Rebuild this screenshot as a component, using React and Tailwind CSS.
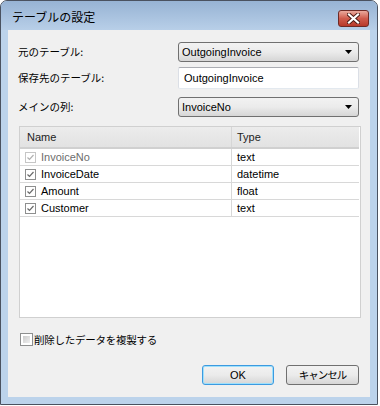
import React from "react";

const FONT = { fontFamily: "'Liberation Sans','Noto Sans CJK JP',sans-serif" };
const JP = { fontFamily: "'Noto Sans CJK JP','Liberation Sans',sans-serif" };

function Arrow() {
  return (
    <svg width="8" height="5" viewBox="0 0 8 5" className="shrink-0">
      <path d="M0 0 H7 L3.5 4 Z" fill="#000" />
    </svg>
  );
}

function Combo({ value }) {
  return (
    <div className="w-[181px] h-[20px] rounded-[3px] border border-[#707070] bg-gradient-to-b from-[#f2f2f2] via-[#ebebeb] to-[#d6d6d6] flex items-center justify-between pl-[3px] pr-[5px] text-[11px] text-black">
      <span>{value}</span>
      <Arrow />
    </div>
  );
}

function RowCheck({ disabled }) {
  const border = disabled ? "border-[#c6c6c6]" : "border-[#8e8f8f]";
  const stroke = disabled ? "#b0b0b0" : "#6a6a6a";
  return (
    <div className={`w-[11px] h-[11px] border ${border} bg-white flex items-center justify-center shrink-0`}>
      <svg width="9" height="9" viewBox="0 0 9 9">
        <path d="M1.5 4.5 L3.5 6.5 L7.5 2" fill="none" stroke={stroke} strokeWidth="1.2" />
      </svg>
    </div>
  );
}

const rows = [
  { name: "InvoiceNo", type: "text", disabled: true },
  { name: "InvoiceDate", type: "datetime" },
  { name: "Amount", type: "float" },
  { name: "Customer", type: "text" },
];

export default function App() {
  return (
    <div className="w-[380px] h-[406px] bg-white" style={FONT}>
      <div className="w-[378px] h-[405px] border border-[#4a5260] rounded-t-[7px] bg-[#bcd3eb] flex flex-col overflow-hidden">
        {/* title bar */}
        <div className="h-[29px] shrink-0 bg-gradient-to-b from-[#97b3d4] to-[#b8cfe8] flex items-start justify-between pl-[11px] pr-[8px]">
          <span className="mt-[9px] text-[12px] leading-[14px] text-black" style={JP}>テーブルの設定</span>
          <div className="mt-[9px] w-[31px] h-[17px] rounded-[3px] border border-[#6e2a25] bg-gradient-to-b from-[#e9a99d] via-[#cf5b4c] to-[#b8392a] flex items-center justify-center">
            <svg width="13" height="11" viewBox="0 0 13 11">
              <path d="M2 1.5 L11 9.5 M11 1.5 L2 9.5" stroke="#4a1a14" strokeWidth="4" strokeLinecap="square" />
              <path d="M2 1.5 L11 9.5 M11 1.5 L2 9.5" stroke="#ffffff" strokeWidth="2.2" strokeLinecap="square" />
            </svg>
          </div>
        </div>
        {/* client area */}
        <div className="mx-[7px] h-[367px] bg-[#f0f0f0] flex flex-col pl-[10px] pr-[11px] pt-[12px]">
          <div className="flex items-center justify-between h-[20px]">
            <span className="text-[10.5px] text-black" style={JP}>元のテーブル:</span>
            <Combo value="OutgoingInvoice" />
          </div>
          <div className="flex items-center justify-between h-[22px] mt-[5px]">
            <span className="text-[10.5px] text-black" style={JP}>保存先のテーブル:</span>
            <div className="w-[181px] h-[22px] bg-white border border-[#dbdfe6] border-t-[#abadb3] border-b-[#e3e9ef] rounded-[2px] flex items-center pl-[5px] text-[11px] text-black">
              OutgoingInvoice
            </div>
          </div>
          <div className="flex items-center justify-between h-[20px] mt-[8px]">
            <span className="text-[10.5px] text-black" style={JP}>メインの列:</span>
            <Combo value="InvoiceNo" />
          </div>
          {/* table */}
          <div className="mt-[9px] ml-[1px] w-[342px] h-[192px] border border-[#d0d0d0] bg-white pr-[1px]">
            <div className="flex h-[22px] bg-gradient-to-b from-[#ececec] to-[#e2e2e2] border-b-2 border-[#d0d0d0] text-[11px] text-[#222]">
              <div className="w-[212px] pl-[7px] flex items-center border-r border-[#d6d6d6]">Name</div>
              <div className="w-[127px] pl-[5px] flex items-center">Type</div>
            </div>
            {rows.map((r) => (
              <div key={r.name} className="flex h-[17px] border-b border-[#d8d8d8] text-[11px]">
                <div className="w-[212px] pl-[5px] flex items-center gap-[5px] border-r border-[#d8d8d8]">
                  <RowCheck disabled={r.disabled} />
                  <span className={r.disabled ? "text-[#6d6d6d]" : "text-black"}>{r.name}</span>
                </div>
                <div className="w-[127px] pl-[5px] flex items-center text-black">{r.type}</div>
              </div>
            ))}
          </div>
          {/* checkbox */}
          <div className="mt-[15px] flex items-center gap-[1px] h-[13px] ml-[2px]">
            <div className="w-[13px] h-[13px] border border-[#8e8f8f] bg-white p-[2px] shrink-0">
              <div className="w-full h-full bg-gradient-to-br from-[#cbcbcb] to-[#f0f0f0]" />
            </div>
            <span className="text-[10.5px] tracking-[-0.25px] text-black" style={JP}>削除したデータを複製する</span>
          </div>
          {/* buttons */}
          <div className="mt-[19px] flex justify-end gap-[12px] pr-[0px]">
            <div className="w-[72px] h-[20px] rounded-[3px] border border-[#3c9ae0] shadow-[inset_0_0_0_1px_#9fe0fb] bg-gradient-to-b from-[#f2f2f2] via-[#ebebeb] to-[#d6d6d6] flex items-center justify-center text-[11px] text-black">
              OK
            </div>
            <div className="w-[73px] h-[20px] rounded-[3px] border border-[#707070] bg-gradient-to-b from-[#f2f2f2] via-[#ebebeb] to-[#d6d6d6] flex items-center justify-center text-[10.5px] tracking-[-1px] text-black" style={JP}>
              キャンセル
            </div>
          </div>
        </div>
      </div>
    </div>
  );
}
